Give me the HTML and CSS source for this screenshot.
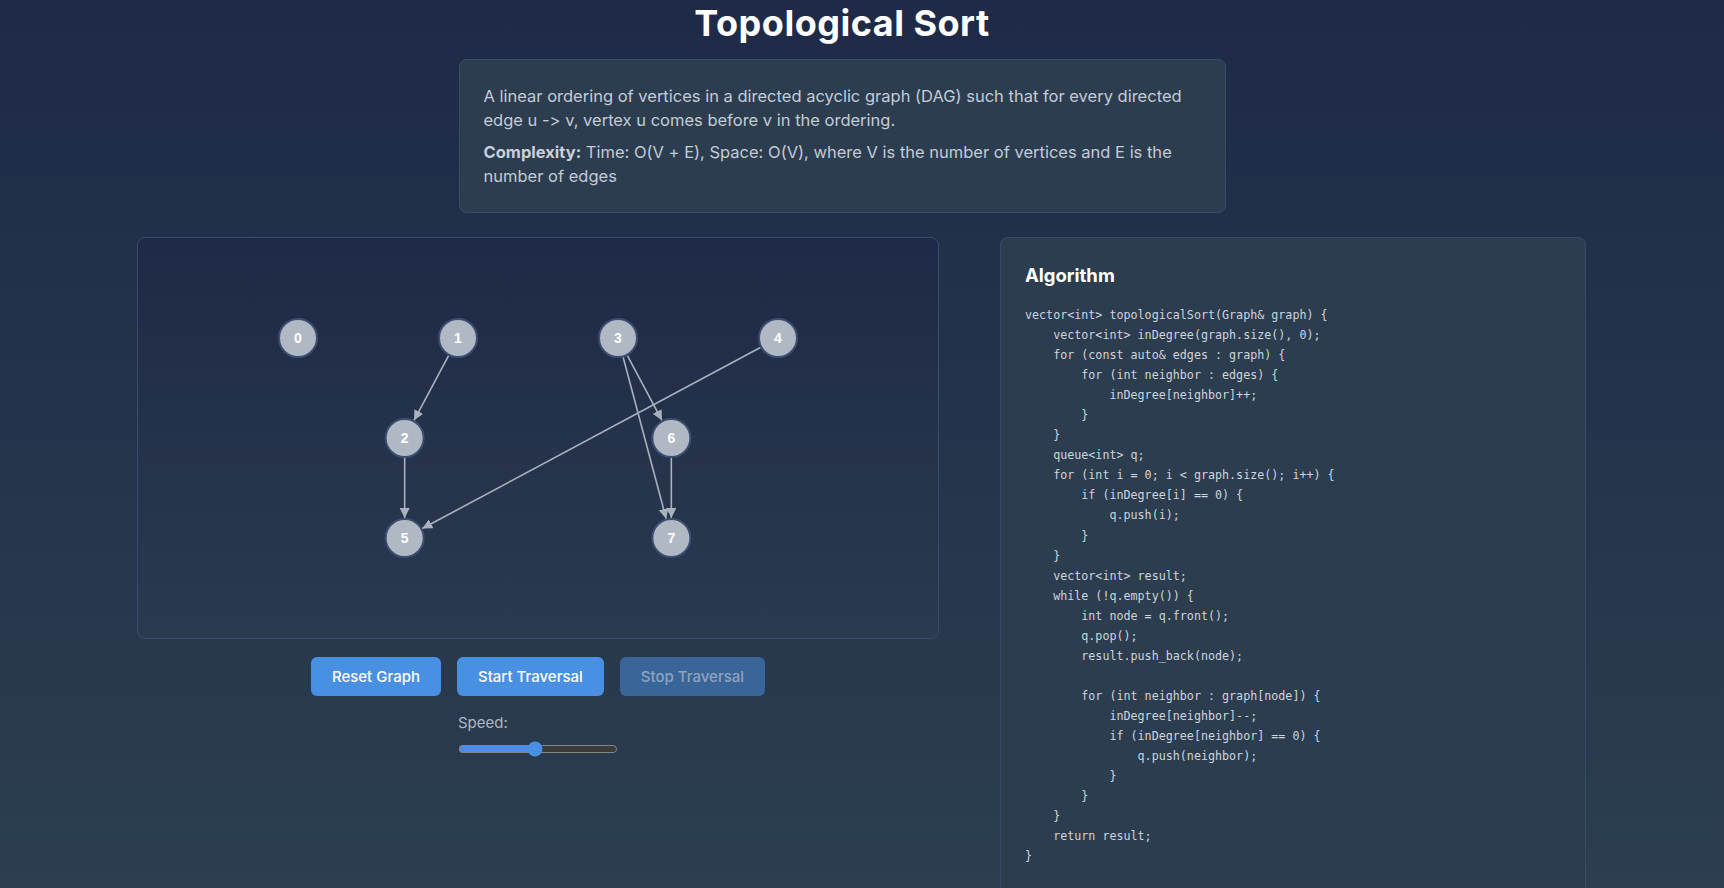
FILE: index.html
```html
<!DOCTYPE html>
<html lang="en">
<head>
<meta charset="utf-8">
<title>Topological Sort</title>
<link rel="stylesheet" href="styles.css">
</head>
<body>
<header class="header">
  <h1 class="title">Topological Sort</h1>
  <section class="desc">
    <p>A linear ordering of vertices in a directed acyclic graph (DAG) such that for every directed edge u -&gt; v, vertex u comes before v in the ordering.</p>
    <p class="complexity"><strong>Complexity:</strong> Time: O(V + E), Space: O(V), where V is the number of vertices and E is the number of edges</p>
  </section>
</header>
<main class="layout">
  <div class="left">
    <div class="graph-panel">
      <svg class="graph" width="800" height="400" viewBox="0 0 800 400">
        <defs>
          <marker id="arrow" markerWidth="10" markerHeight="10" refX="10" refY="5" orient="auto" markerUnits="userSpaceOnUse">
            <path d="M0,0 L10,5 L0,10 z" fill="#a8b2bf"/>
          </marker>
        </defs>
        <g class="edges">
          <line x1="310.59" y1="117.65" x2="276.08" y2="182.35" marker-end="url(#arrow)"/>
          <line x1="266.67" y1="220" x2="266.67" y2="280" marker-end="url(#arrow)"/>
          <line x1="489.41" y1="117.65" x2="523.92" y2="182.35" marker-end="url(#arrow)"/>
          <line x1="485.15" y1="119.32" x2="528.18" y2="280.68" marker-end="url(#arrow)"/>
          <line x1="622.37" y1="109.44" x2="284.30" y2="290.56" marker-end="url(#arrow)"/>
          <line x1="533.33" y1="220" x2="533.33" y2="280" marker-end="url(#arrow)"/>
        </g>
        <g class="nodes">
          <circle cx="160" cy="100" r="19"/><text x="160" y="100">0</text>
          <circle cx="320" cy="100" r="19"/><text x="320" y="100">1</text>
          <circle cx="480" cy="100" r="19"/><text x="480" y="100">3</text>
          <circle cx="640" cy="100" r="19"/><text x="640" y="100">4</text>
          <circle cx="266.67" cy="200" r="19"/><text x="266.67" y="200">2</text>
          <circle cx="533.33" cy="200" r="19"/><text x="533.33" y="200">6</text>
          <circle cx="266.67" cy="300" r="19"/><text x="266.67" y="300">5</text>
          <circle cx="533.33" cy="300" r="19"/><text x="533.33" y="300">7</text>
        </g>
      </svg>
    </div>
    <div class="controls">
      <button class="btn">Reset Graph</button>
      <button class="btn">Start Traversal</button>
      <button class="btn" disabled>Stop Traversal</button>
    </div>
    <div class="speed">
      <label class="speed-label" for="speed">Speed:</label>
      <input id="speed" class="speed-range" type="range" min="0" max="100" value="48">
    </div>
  </div>
  <aside class="code-panel">
    <h3 class="code-title">Algorithm</h3>
<pre class="code">vector&lt;int&gt; topologicalSort(Graph&amp; graph) {
    vector&lt;int&gt; inDegree(graph.size(), 0);
    for (const auto&amp; edges : graph) {
        for (int neighbor : edges) {
            inDegree[neighbor]++;
        }
    }
    queue&lt;int&gt; q;
    for (int i = 0; i &lt; graph.size(); i++) {
        if (inDegree[i] == 0) {
            q.push(i);
        }
    }
    vector&lt;int&gt; result;
    while (!q.empty()) {
        int node = q.front();
        q.pop();
        result.push_back(node);

        for (int neighbor : graph[node]) {
            inDegree[neighbor]--;
            if (inDegree[neighbor] == 0) {
                q.push(neighbor);
            }
        }
    }
    return result;
}</pre>
  </aside>
</main>
</body>
</html>
```
FILE: styles.css
```css
* { box-sizing: border-box; }

html, body {
  margin: 0;
  padding: 0;
}

body {
  font-family: "Inter", "Noto Sans", sans-serif;
  font-variant-ligatures: none;
  font-feature-settings: "calt" 0, "liga" 0;
  color: #c5cdd8;
  background: linear-gradient(180deg, #1e2a47 0%, #2c3e50 100%) fixed;
  min-height: 100vh;
  padding-bottom: 24px;
}

.header {
  padding-right: 40px;
}

.title {
  margin: 0;
  padding-top: 3px;
  text-align: center;
  font-size: 36px;
  line-height: 40px;
  font-weight: 700;
  color: #ffffff;
  letter-spacing: 0.5px;
}

.desc {
  width: 767px;
  margin: 16px auto 0;
  padding: 24px 24px;
  background: #2d3d50;
  border: 1px solid #3a4b66;
  border-radius: 8px;
  font-size: 16.5px;
  line-height: 24px;
  color: #c3cbd6;
}

.desc p { margin: 0; }
.desc .complexity { margin-top: 8px; }
.desc strong { font-weight: 700; color: #c9d0da; }

.layout {
  display: grid;
  grid-template-columns: 802px 586px;
  column-gap: 61px;
  justify-content: center;
  align-items: start;
  margin-top: 24px;
  padding-right: 1px;
}

.graph-panel {
  width: 802px;
  height: 402px;
  border: 1px solid #3a4a6b;
  border-radius: 8px;
  background: linear-gradient(180deg, #1f2a46 0%, #2a3a4f 100%);
  overflow: hidden;
}

.graph { display: block; }

.edges line {
  stroke: #a8b2bf;
  stroke-width: 1.6;
}

.nodes circle {
  fill: #b0b8c4;
  stroke: #3d4e72;
  stroke-width: 2;
}

.nodes text {
  fill: #ffffff;
  font-family: "Liberation Sans", Arial, sans-serif;
  font-size: 14px;
  font-weight: 700;
  text-anchor: middle;
  dominant-baseline: central;
}

.controls {
  display: flex;
  justify-content: center;
  gap: 16px;
  margin-top: 18px;
}

.btn {
  font-family: "Inter", "Noto Sans", sans-serif;
  font-size: 15px;
  font-weight: 500;
  height: 39px;
  padding: 0 21px;
  border: none;
  border-radius: 6px;
  background: #4a90e2;
  color: #ffffff;
  cursor: pointer;
}

.btn:disabled {
  background: #3a6598;
  color: #8da4c0;
  cursor: not-allowed;
}

.speed {
  width: 160px;
  margin: 16px auto 0;
  display: flex;
  flex-direction: column;
  align-items: flex-start;
}

.speed-label {
  font-size: 15px;
  line-height: 22px;
  color: #aeb7c3;
}

.speed-range {
  width: 160px;
  margin: 7px 0 0;
  accent-color: #4a90e2;
  color-scheme: dark;
}

.code-panel {
  background: #2d3d50;
  border: 1px solid #3a4b66;
  border-radius: 8px;
  padding: 24px 24px 32px 24px;
}

.code-title {
  margin: 0;
  font-size: 18.5px;
  line-height: 27px;
  font-weight: 700;
  color: #ffffff;
}

.code {
  margin: 16px 0 0;
  font-family: "DejaVu Sans Mono", "Liberation Mono", monospace;
  font-size: 11.7px;
  line-height: 20.05px;
  color: #cdd4dd;
}
```
